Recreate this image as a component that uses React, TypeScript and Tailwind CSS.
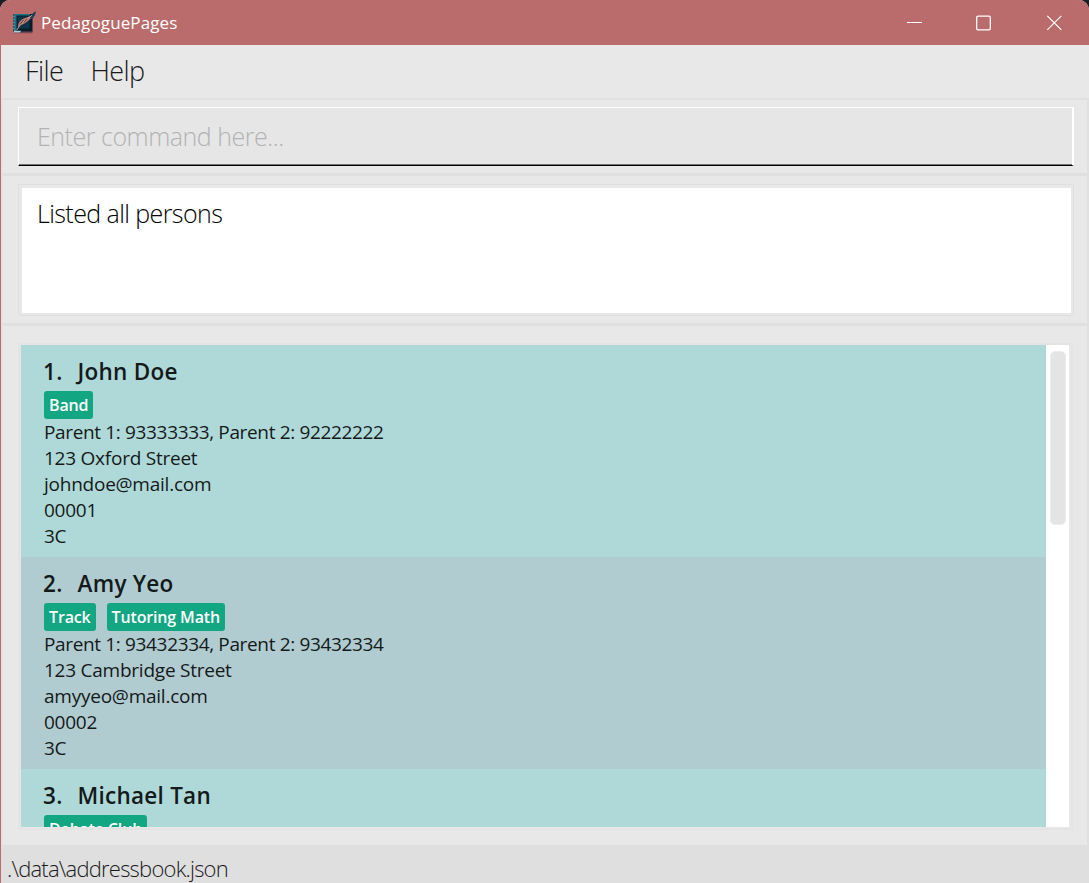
type Person = {
  name: string;
  tags: string[];
  phones: string;
  details: string[];
};

const people: Person[] = [
  {
    name: "John Doe",
    tags: ["Band"],
    phones: "Parent 1: 93333333, Parent 2: 92222222",
    details: ["123 Oxford Street", "johndoe@mail.com", "00001", "3C"],
  },
  {
    name: "Amy Yeo",
    tags: ["Track", "Tutoring Math"],
    phones: "Parent 1: 93432334, Parent 2: 93432334",
    details: ["123 Cambridge Street", "amyyeo@mail.com", "00002", "3C"],
  },
  {
    name: "Michael Tan",
    tags: ["Debate Club"],
    phones: "",
    details: [],
  },
];

function AppIcon() {
  return (
    <svg className="h-6 w-6" viewBox="0 0 24 24">
      <path d="M1.500 3H20.500v18H1.500z" fill="#081c2b" />
      <path d="M2 3H18v1.400H4.500V20H2z" fill="#1b7482" />
      <path d="M5.500 5.500h12v12h-12z" fill="#0b3549" />
      <path d="M1 5.500h2M1 8.500h2M1 11.500h2M1 14.500h2M1 17.500h2" stroke="#35a0ac" strokeWidth="0.9" />
      <path d="M2 20.500h18.500v1.700H2z" fill="#774650" />
      <path d="M2 19.800h7l-1 1.600H2z" fill="#a9cfd8" />
      <path d="M5 17.500C4.500 12 9 7.500 14 6 18 4.800 21 3 23.500.3 23.800 5 20 8 18 10 15 13.500 11 14.500 8 15z" fill="#10283a" />
      <path d="M6 16C6 10.500 10 7.500 14.500 6.500 17 5.800 18.500 5 20.500 3.500 19 8 15 12 9 14z" fill="#bb7672" />
      <path d="M4.800 19C8 13 13 9 20 4.500" fill="none" stroke="#e0a79c" strokeWidth="0.9" />
      <path d="M8 13.500l3.500-4.500M12 11.500l3-4" stroke="#3a3340" strokeWidth="0.8" />
      <path d="M18 6.500C20 4.500 22.300 2.500 23.500.3c.2 3.500-1.500 5.700-4.500 8z" fill="#184a5e" />
    </svg>
  );
}

function TitleBar() {
  return (
    <header className="flex h-[45px] shrink-0 items-center bg-[#b96c6b] pl-3 text-white">
      <AppIcon />
      <span className="ml-[5px] grow text-[17px] leading-6 tracking-[0.12px]">PedagoguePages</span>
      <svg className="mr-[53px] h-4 w-4" viewBox="0 0 16 16" fill="none" stroke="white">
        <path d="M1 7.500H16" />
      </svg>
      <svg className="mr-[55px] h-4 w-4" viewBox="0 0 16 16" fill="none" stroke="white" strokeWidth="1.3">
        <rect x="1.700" y="1.200" width="13.600" height="13.600" rx="1.300" />
      </svg>
      <svg className="mr-[27px] h-4 w-4" viewBox="0 0 16 16" fill="none" stroke="white" strokeWidth="1.2">
        <path d="M1.300.8l14 14M15.300.8L1.300 14.800" />
      </svg>
    </header>
  );
}

function PersonCard({ person, index }: { person: Person; index: number }) {
  return (
    <li className={`h-[212px] shrink-0 pt-[11px] pl-[22px] ${index % 2 ? "bg-[#b0ccd0]" : "bg-[#afd9d8]"}`}>
      <h2 className="flex h-[35px] gap-[15px] text-[22.500px] leading-8 font-semibold tracking-[0.25px] text-[#14191a]">
        <span>{index + 1}.</span>
        <span>{person.name}</span>
      </h2>
      <div className="ml-px flex gap-[11px]">
        {person.tags.map((tag) => (
          <span
            key={tag}
            className="h-7 rounded-[3px] bg-[#13a682] px-[5px] text-[16px] leading-7 font-semibold tracking-[-0.15px] text-white"
          >
            {tag}
          </span>
        ))}
      </div>
      <div className="ml-px text-[19px] leading-[26px] text-[#14191a]">
        <p className="tracking-[-0.35px]">{person.phones}</p>
        {person.details.map((line) => (
          <p key={line} className="tracking-[-0.24px]">
            {line}
          </p>
        ))}
      </div>
    </li>
  );
}

export default function App() {
  return (
    <div className="h-[883px] w-[1089px] bg-[#1d1d24] font-['Open_Sans',sans-serif] whitespace-nowrap">
      <div className="flex h-full flex-col overflow-hidden rounded-t-[10px] bg-[#e8e8e8]">
        <TitleBar />
        <div className="flex grow flex-col border-l border-[#b96c6b]">
          <nav className="flex h-[53px] shrink-0 gap-[27px] pl-6 text-[27px] leading-[51px] font-light tracking-[-0.55px] text-[#1a1a1a]">
            <span>File</span>
            <span>Help</span>
          </nav>

          <section className="h-[77px] shrink-0 border-2 border-[#e0e0e0] border-l-[#e3e3e3] pt-[7px] pr-[13px] pl-[15px]">
            <div className="h-[59px] border-t border-r-2 border-b border-l border-t-white border-r-white border-b-black border-l-white bg-[#e6e6e6] pl-[18px] text-[25px] leading-[57px] font-light tracking-[-0.48px] text-[#b3b3b3] shadow-[inset_0_-1px_0_#737373]">
              Enter command here...
            </div>
          </section>

          <section className="h-[150px] shrink-0 border-x-2 border-t border-b-2 border-[#e0e0e0] border-l-[#e3e3e3] pt-2 pr-[13px] pl-[15px]">
            <div className="h-[132px] border border-[#dfdfdf] p-[3px] pr-[2px]">
              <div className="h-[125px] bg-white pl-[15px] text-[25px] leading-[51px] font-light tracking-[-0.58px] text-black">
                Listed all persons
              </div>
            </div>
          </section>

          <section className="h-[520px] shrink-0 border-x-2 border-t border-[#e0e0e0] border-l-[#e3e3e3] pt-[17px] pr-[14px] pl-[15px]">
            <div className="h-[487px] border-2 border-l-3 border-[#e4e4e4]">
              <div className="flex h-[482px] w-[1048px] overflow-hidden bg-white">
                <ul className="flex w-[1025px] flex-col overflow-hidden">
                  {people.map((person, i) => (
                    <PersonCard key={person.name} person={person} index={i} />
                  ))}
                </ul>
                <div className="mt-[6px] ml-1 h-[174px] w-4 rounded-[5px] border border-[#ededed] bg-[#e4e4e4]" />
              </div>
            </div>
          </section>

          <footer className="h-[38px] shrink-0 bg-[#dfdfdf] pl-[6px] text-[22px] leading-[47px] font-light tracking-[-0.78px] text-[#1a1a1a]">
            .\data\addressbook.json
          </footer>
        </div>
      </div>
    </div>
  );
}
